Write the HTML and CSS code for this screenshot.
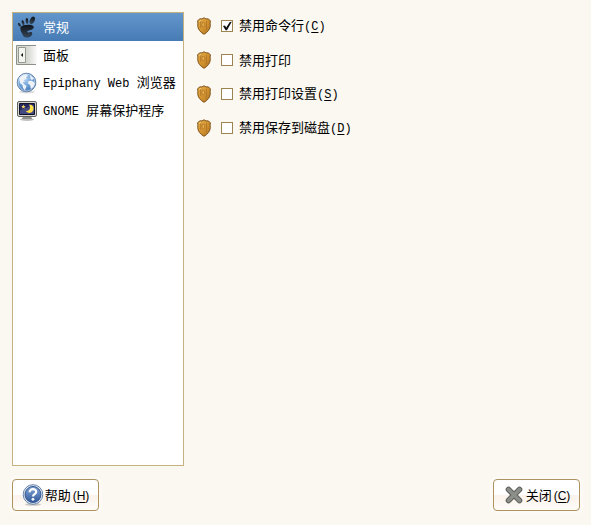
FILE: index.html
```html
<!DOCTYPE html>
<html lang="zh-CN">
<head>
<meta charset="utf-8">
<title>常规</title>
<link rel="stylesheet" href="styles.css">
</head>
<body>
<svg class="defs" aria-hidden="true">
  <defs>
    <linearGradient id="gold" x2="1" y2="1"><stop stop-color="#e5b04d"/><stop offset=".5" stop-color="#d3942f"/><stop offset="1" stop-color="#ae7425"/></linearGradient>
    <radialGradient id="globe" cx=".4" cy=".3" r=".75"><stop stop-color="#b9d5f2"/><stop offset=".55" stop-color="#6d9fd6"/><stop offset="1" stop-color="#3e6fae"/></radialGradient>
    <linearGradient id="drawer"><stop stop-color="#d8dbd2"/><stop offset=".5" stop-color="#d6d8d2"/><stop offset="1" stop-color="#fff"/></linearGradient>
    <linearGradient id="foot" x2="0" y2="1"><stop stop-color="#10151b"/><stop offset="1" stop-color="#34475a"/></linearGradient>
    <linearGradient id="blue" x2="0" y2="1"><stop stop-color="#86a8d8"/><stop offset="1" stop-color="#31599c"/></linearGradient>
    <symbol id="shield" viewBox="0 0 14 18">
      <path d="M7 .8Q9 2.6 11 1.8L13.4 3.7Q12.8 6 13.3 8.5Q13 14 7 17.3Q1 14 .7 8.5Q1.2 6 .6 3.7L3 1.8Q5 2.6 7 .8Z" fill="url(#gold)" stroke="#80541c"/>
      <path d="M9.5 4V13.5M3.7 4.2V11" fill="none" stroke="#b0742a" stroke-width=".8"/>
      <ellipse cx="6.3" cy="7.5" rx="1.5" ry="2.3" fill="#e5ab48" stroke="#a96f24" stroke-width=".7"/>
      <path d="M2.2 4.5L4 3.2" stroke="#f4cf7c" fill="none"/>
    </symbol>
  </defs>
</svg>
<main class="content">
  <nav class="sections">
    <a class="section selected" href="#general" aria-current="page">
      <svg class="icon" viewBox="0 0 22 22" aria-hidden="true"><g fill="url(#foot)"><path d="M4.4 12C4.8 9 9.5 9 13 8.8C17.5 8.8 18.8 10.8 17 12.7C15.5 14.3 11.8 14.2 11.3 15.4C11.2 16.6 13 17 14.5 16.1C16.6 15.5 17 18.5 15 20.3C12.4 22.4 8 22 6.8 19C6 16.6 4 14.8 4.4 12Z"/><ellipse cx="16.3" cy="4.3" rx="2.3" ry="4" transform="rotate(24 16.3 4.3)"/><ellipse cx="11" cy="5" rx="1.4" ry="2.9" transform="rotate(-4 11 5)"/><ellipse cx="7" cy="6.6" rx="1.2" ry="2.5" transform="rotate(-20 7 6.6)"/><ellipse cx="3.5" cy="8.8" rx="1.1" ry="2.1" transform="rotate(-32 3.5 8.8)"/></g></svg>
      <span>常规</span>
    </a>
    <a class="section" href="#panel">
      <svg class="icon" viewBox="0 0 22 22" aria-hidden="true"><path d="M1 2H22V20H1Z" fill="url(#drawer)"/><path d="M.5 1.5H20M.5 20.5H20M.5 1.5V20.5" stroke="#8d8f88" fill="none"/><path d="M2.5 3.5H9.5V18.5H2.5Z" fill="#f3f4f0" stroke="#969991"/><path d="M7 9V13L4.8 11Z" fill="#171b17"/></svg>
      <span>面板</span>
    </a>
    <a class="section" href="#epiphany">
      <svg class="icon" viewBox="0 0 22 22" aria-hidden="true"><ellipse cx="11" cy="20" rx="8" ry="1.5" fill="#ddd"/><circle cx="10.5" cy="10.5" r="9.3" fill="url(#globe)" stroke="#6784a9"/><path d="M3 6Q6 2 10.5 2.2L12 4L10 5L10.5 7L7.5 8L9 10L6.5 10L8.5 12.5L10.5 14L9 18.3L7 16L6.5 13L4 11ZM14 3L18 6.5L16 8L14.5 7ZM12.5 9L16 8.7L19 11L17.4 15L15 17L14 13L12 11.5Z" fill="#edf3f9"/><circle cx="10.5" cy="10.5" r="8.3" fill="none" stroke="#dcebfa" stroke-opacity=".6"/></svg>
      <span><span class="latin">Epiphany Web </span>浏览器</span>
    </a>
    <a class="section" href="#screensaver">
      <svg class="icon" viewBox="0 0 22 22" aria-hidden="true"><ellipse cx="11" cy="19.5" rx="7" ry="1.5" fill="#bebebe"/><path d="M7 16H15L16 19H6Z" fill="#8e8f8b"/><rect x="1.5" y="1.5" width="19" height="15" rx="1.5" fill="#d7d7d0" stroke="#62635f"/><path d="M3.5 3.5H18.5V14.5H3.5Z" fill="#24285e" stroke="#11132e"/><path d="M4 10L18 5V14H4Z" fill="#444980"/><path d="M13 4.5C17 4.3 18.5 8 17 10.7C15 13.9 11 13.3 9.8 10.7C13 11.7 15.5 8.4 13 4.5Z" fill="#ffdf48"/><path d="M7.5 4.5L8 6L9.6 6.2L8.3 7.2L8.6 8.7L7.4 7.8L6.1 8.6L6.5 7.1L5.3 6.2L6.8 6Z" fill="#f8dd64"/></svg>
      <span><span class="latin">GNOME </span>屏幕保护程序</span>
    </a>
  </nav>
  <section class="options">
    <div class="option"><svg class="shield" aria-hidden="true"><use href="#shield"/></svg><input type="checkbox" id="command" checked><label for="command">禁用命令行<span class="key">(<u>C</u>)</span></label></div>
    <div class="option"><svg class="shield" aria-hidden="true"><use href="#shield"/></svg><input type="checkbox" id="print"><label for="print">禁用打印</label></div>
    <div class="option"><svg class="shield" aria-hidden="true"><use href="#shield"/></svg><input type="checkbox" id="setup"><label for="setup">禁用打印设置<span class="key">(<u>S</u>)</span></label></div>
    <div class="option"><svg class="shield" aria-hidden="true"><use href="#shield"/></svg><input type="checkbox" id="save"><label for="save">禁用保存到磁盘<span class="key">(<u>D</u>)</span></label></div>
  </section>
</main>
<footer class="actions">
  <button type="button"><svg class="icon" viewBox="0 0 22 22" aria-hidden="true"><ellipse cx="11" cy="20.5" rx="8" ry="1.3" fill="#cbc7c2"/><circle cx="11" cy="10.5" r="9.8" fill="#e5ebf4" stroke="#6682ab"/><circle cx="11" cy="10.5" r="8" fill="url(#blue)" stroke="#31558e"/><path d="M7.7 8.3C7.5 4.2 14.2 4.2 14.2 7.8C14.2 10.2 11 10 11 12.6" fill="none" stroke="#fff" stroke-width="2.2"/><circle cx="11" cy="15.3" r="1.4" fill="#fff"/></svg><span>帮助<span class="access">(<u>H</u>)</span></span></button>
  <button type="button"><svg class="icon" viewBox="0 0 22 22" aria-hidden="true"><path d="M5.5 5.5L16.5 16.5M16.5 5.5L5.5 16.5" stroke="#5e5f5c" stroke-width="5.6" stroke-linecap="round"/><path d="M5.5 5.5L16.5 16.5M16.5 5.5L5.5 16.5" stroke="#8c8e89" stroke-width="3.6" stroke-linecap="round"/></svg><span>关闭<span class="access">(<u>C</u>)</span></span></button>
</footer>
</body>
</html>
```
FILE: styles.css
```css
* { box-sizing: border-box; }

body {
  display: flex;
  flex-direction: column;
  gap: 13px;
  min-height: 100vh;
  margin: 0;
  padding: 12px 11px 14px 12px;
  background: #fbf8f1;
  color: #000;
  font: 13px/18px "Noto Sans CJK SC", sans-serif;
}

.defs { position: absolute; width: 0; height: 0; }

.content {
  display: flex;
  flex: 1;
  gap: 13px;
}

.sections {
  flex: none;
  min-width: 172px;
  border: 1px solid #c5b27e;
  background: #fff;
}

.section {
  display: flex;
  align-items: center;
  gap: 5px;
  height: 28px;
  padding: 0 3px;
  color: inherit;
  text-decoration: none;
  white-space: nowrap;
}

.selected {
  background: linear-gradient(#6396cb, #477bb5);
  color: #fff;
}

.icon {
  flex: none;
  width: 22px;
  height: 22px;
}

.latin,
.key {
  font-family: "Liberation Mono", monospace;
  font-size: 12px;
  white-space: pre;
}

.options { flex: 1; }

.option {
  display: flex;
  align-items: center;
  height: 28px;
  margin-bottom: 6px;
}

.shield {
  width: 14px;
  height: 18px;
  margin-right: 10px;
}

input {
  appearance: none;
  width: 12px;
  height: 12px;
  margin: 0 6px 0 0;
  border: 1px solid #9c8450;
  background: #fff;
}

input:checked::after {
  content: "";
  display: block;
  width: 10px;
  height: 10px;
  background: #111;
  clip-path: polygon(10% 50%, 30% 45%, 42% 66%, 78% 10%, 98% 8%, 50% 92%, 36% 92%);
}

u { text-underline-offset: 2px; }

.actions {
  display: flex;
  justify-content: space-between;
}

button {
  display: flex;
  align-items: center;
  justify-content: center;
  gap: 1px;
  min-width: 87px;
  height: 32px;
  padding: 0 8px;
  border: 1px solid #ad945f;
  border-radius: 4px;
  background: linear-gradient(#fff 50%, #fbf2eb 50%, #fffcf8);
  box-shadow: 0 0 0 3px #fdfaf6;
  color: #000;
  font: inherit;
  white-space: nowrap;
}

.access {
  margin-left: 2px;
  font-family: "Liberation Sans", sans-serif;
  font-size: 12px;
}
```
